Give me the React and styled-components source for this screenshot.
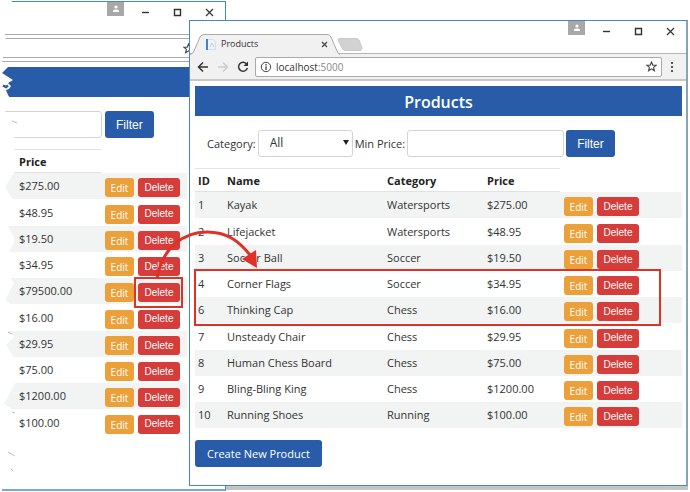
import React from "react";
import styled, { createGlobalStyle, css } from "styled-components";

const PRODUCTS = [
  [1, "Kayak", "Watersports", "$275.00"],
  [2, "Lifejacket", "Watersports", "$48.95"],
  [3, "Soccer Ball", "Soccer", "$19.50"],
  [4, "Corner Flags", "Soccer", "$34.95"],
  [6, "Thinking Cap", "Chess", "$16.00"],
  [7, "Unsteady Chair", "Chess", "$29.95"],
  [8, "Human Chess Board", "Chess", "$75.00"],
  [9, "Bling-Bling King", "Chess", "$1200.00"],
  [10, "Running Shoes", "Running", "$100.00"],
];

const OLD_PRICES = [
  "$275.00", "$48.95", "$19.50", "$34.95", "$79500.00",
  "$16.00", "$29.95", "$75.00", "$1200.00", "$100.00",
];

const BLUE = "#285ca8";
const RED = "#de3127";

const GlobalStyle = createGlobalStyle`
  *, *::before, *::after { box-sizing: border-box; }
  body {
    margin: 0;
    background: #fff;
    color: #333;
    font: 11px/18px "Open Sans", "Noto Sans", sans-serif;
  }
  button, input, select { font: inherit; color: inherit; margin: 0; }
`;

const Desktop = styled.main`
  position: relative;
  min-height: 100vh;
  overflow: hidden;
  padding: 20px 2px 6px 189px;
`;

const windowFrame = css`
  display: flex;
  flex-direction: column;
  background: #fff;
  border: 1px solid #4389c9;
`;

const BackWindow = styled.section`
  ${windowFrame}
  position: absolute;
  left: 0;
  top: 1px;
  bottom: 1px;
  width: 226px;
  border-left: 0;
  border-bottom: 2px solid #78a9d8;
`;

const FrontWindow = styled.section`
  ${windowFrame}
  position: relative;
  min-height: calc(100vh - 26px);
  border-right: 2px solid #86a5b5;

  &::after {
    content: "";
    position: absolute;
    left: 36px;
    right: -2px;
    top: calc(100% + 1px);
    height: 4px;
    background: #c4c4c4;
  }
`;

const TitleBar = styled.header`
  display: flex;
  align-items: flex-start;
  height: 32px;
`;

const WindowControls = styled.div`
  display: flex;
  margin-left: auto;
`;

const ControlButton = styled.button`
  display: grid;
  place-items: center;
  width: 32px;
  height: 20px;
  padding: 0;
  border: 0;
  background: none;
  color: #333;
`;

const UserButton = styled(ControlButton)`
  width: 17px;
  height: 14px;
  margin-right: 5px;
  background: #a8a8a8;
  color: #fff;
`;

const Tab = styled.div`
  position: relative;
  display: flex;
  align-items: center;
  gap: 5px;
  width: 150px;
  height: 20px;
  margin-top: 13px;
  padding: 0 12px 0 16px;
  color: #333;
  font-size: 9px;
`;

const TabShape = styled.svg`
  position: absolute;
  inset: 0;
  z-index: 0;
`;

const TabTitle = styled.span`
  position: relative;
  flex: 1;
`;

const TabIcon = styled.svg`
  position: relative;
`;

const TabClose = styled.button`
  position: relative;
  display: flex;
  padding: 0;
  border: 0;
  background: none;
`;

const NewTab = styled.button`
  display: flex;
  margin-top: 17px;
  margin-left: -3px;
  padding: 0;
  border: 0;
  background: none;
`;

const Toolbar = styled.nav`
  display: flex;
  align-items: center;
  height: 28px;
  padding: 0 4px 0 3px;
  background: #f1f1f1;
  border-top: 1px solid #b5b5b5;
  border-bottom: 2px solid #c9c7c3;
`;

const BackToolbar = styled.nav`
  display: flex;
  align-items: center;
  height: 28px;
  border-top: 1px solid #aaa;
  border-bottom: 1px solid #aaa;
`;

const ToolButton = styled.button`
  display: grid;
  place-items: center;
  width: 20px;
  height: 20px;
  padding: 0;
  border: 0;
  background: none;
  color: #444;
`;

const AddressBar = styled.div`
  display: flex;
  flex: 1;
  align-items: center;
  gap: 4px;
  height: 20px;
  margin-left: 2px;
  padding-left: 4px;
  background: #fff;
  border: 1px solid #aaa;
  border-radius: 2px;
`;

const BackAddressBar = styled(AddressBar)`
  margin: 0;
  padding-left: 178px;
  border-left: 0;
`;

const AddressText = styled.span`
  flex: 1;
  color: #333;
  font-size: 10px;
`;

const Port = styled.span`
  color: #888;
`;

const Page = styled.div`
  padding: 5px 4px 18px 5px;
`;

const BackPage = styled.div`
  padding-top: 5px;
`;

const Banner = styled.h1`
  height: 30px;
  margin: 0;
  background: ${BLUE};
  color: #fff;
  font-size: 16px;
  font-weight: 600;
  line-height: 32px;
  text-align: center;
`;

const FilterForm = styled.form`
  display: flex;
  align-items: center;
  gap: ${(p) => (p.$inset ? "2px" : "3px")};
  padding: 14px 0 11px ${(p) => (p.$inset ? "12px" : "0")};
`;

const fieldBox = css`
  height: 27px;
  background: #fff;
  border: 1px solid #d4d4d4;
  border-radius: 3px;
`;

const PriceInput = styled.input`
  ${fieldBox}
  width: ${(p) => (p.$narrow ? "102px" : "157px")};
`;

const SelectBox = styled.div`
  position: relative;
  display: flex;
`;

const CategorySelect = styled.select`
  ${fieldBox}
  appearance: none;
  width: 95px;
  padding: 0 12px 1px 11px;
  font-size: 12px;
`;

const SelectArrow = styled.svg`
  position: absolute;
  right: 4px;
  top: 10px;
  pointer-events: none;
`;

const FieldLabel = styled.label`
  white-space: nowrap;
`;

const PrimaryButton = styled.button`
  height: 27px;
  padding: 0 ${(p) => (p.$system ? "11px" : "12px")};
  border: 0;
  border-radius: 3px;
  background: ${BLUE};
  color: #fff;
  font-family: ${(p) => (p.$system ? '"Liberation Sans", Arial, sans-serif' : "inherit")};
  font-size: ${(p) => (p.$system ? "12px" : "11px")};
`;

const ProductTable = styled.table`
  width: ${(p) => (p.$narrow ? "187px" : "100%")};
  table-layout: fixed;
  border-collapse: separate;
  border-spacing: 0;
  line-height: 18px;
`;

const Column = styled.col`
  width: ${(p) => p.$width};
`;

const HeadCell = styled.th`
  height: 24px;
  padding: 1px 0 0 ${(p) => (p.$indent ? "19px" : "3px")};
  border-top: 1px solid #e2e2e2;
  border-bottom: 1px solid #e2e2e2;
  color: #222;
  font-weight: 700;
  text-align: left;
`;

const Row = styled.tr`
  height: 26px;
  &:nth-child(4n + 2) { height: 27px; }
  &:nth-child(odd) { background: #f1f4f2; }
`;

const Cell = styled.td`
  padding: 0 0 0 ${(p) => (p.$indent ? "19px" : "3px")};
  white-space: nowrap;
`;

const Actions = styled.div`
  display: flex;
  gap: 4px;
  padding-top: 3px;
  padding-left: 1px;
`;

const actionButton = css`
  height: 19px;
  border: 0;
  border-radius: 3px;
  color: #fff;
  font-size: 10px;
  line-height: 20px;
  text-align: center;
  text-decoration: none;
`;

const EditLink = styled.a`
  ${actionButton}
  width: 29px;
  background: #eca03a;
`;

const DeleteButton = styled.button`
  ${actionButton}
  width: 42px;
  padding: 0;
  background: #d53c3a;
  font-family: "Liberation Sans", Arial, sans-serif;
  line-height: 18px;
`;

const PageFooter = styled.footer`
  padding-top: 12px;
`;

const TornEdge = styled.svg`
  position: absolute;
  left: 0;
  top: -2px;
  pointer-events: none;
`;

const Annotation = styled.svg`
  position: absolute;
  left: 0;
  top: 0;
  pointer-events: none;
`;

function Controls() {
  return (
    <WindowControls>
      <UserButton aria-label="Profile">
        <svg width="8" height="8" viewBox="0 0 8 8" fill="currentColor">
          <circle cx="4" cy="2" r="1.6" />
          <path d="M1 7V5.8Q1 4.5 4 4.5T7 5.8V7Z" />
        </svg>
      </UserButton>
      <ControlButton aria-label="Minimize">
        <svg width="9" height="9" viewBox="0 0 9 9">
          <path d="M1 4.5H8" stroke="currentColor" strokeWidth="1.4" />
        </svg>
      </ControlButton>
      <ControlButton aria-label="Maximize">
        <svg width="9" height="9" viewBox="0 0 9 9">
          <path d="M1.5 1.5H7.5V7.5H1.5Z" fill="none" stroke="currentColor" strokeWidth="1.4" />
        </svg>
      </ControlButton>
      <ControlButton aria-label="Close">
        <svg width="9" height="9" viewBox="0 0 9 9">
          <path d="M1 1L8 8M8 1L1 8" stroke="currentColor" strokeWidth="1.2" />
        </svg>
      </ControlButton>
    </WindowControls>
  );
}

function Star() {
  return (
    <ToolButton aria-label="Bookmark">
      <svg width="11" height="11" viewBox="0 0 11 11" fill="none" stroke="currentColor" strokeWidth="1.1">
        <path d="M5.5 1L6.8 4.1L10.1 4.3L7.6 6.4L8.4 9.7L5.5 7.9L2.6 9.7L3.4 6.4L.9 4.3L4.2 4.1Z" />
      </svg>
    </ToolButton>
  );
}

function RowActions() {
  return (
    <Actions>
      <EditLink href="#edit">Edit</EditLink>
      <DeleteButton>Delete</DeleteButton>
    </Actions>
  );
}

function PreviousWindow() {
  return (
    <BackWindow aria-label="Products before deletion">
      <TitleBar><Controls /></TitleBar>
      <BackToolbar>
        <BackAddressBar><Star /></BackAddressBar>
      </BackToolbar>
      <BackPage>
        <Banner />
        <FilterForm onSubmit={(e) => e.preventDefault()}>
          <PriceInput $narrow aria-label="Min Price" />
          <PrimaryButton $system>Filter</PrimaryButton>
        </FilterForm>
        <ProductTable $narrow>
          <colgroup><Column $width="101px" /><Column /></colgroup>
          <thead><tr><HeadCell $indent>Price</HeadCell></tr></thead>
          <tbody>
            {OLD_PRICES.map((price) => (
              <Row key={price}>
                <Cell $indent>{price}</Cell>
                <Cell><RowActions /></Cell>
              </Row>
            ))}
          </tbody>
        </ProductTable>
      </BackPage>
      <TornEdge width="20" height="492" viewBox="0 0 20 492">
        <path
          fill="#fff"
          d="M0 0H12L5 34L6 40L3 57L2 62L8 67L2 73L13 80L8 83L11 86L9 89L6 90L8 95L10 98L5 111L15 124L14 150V173L5 187L13 200L8 226L15 240L9 252L10 277L14 283L5 300L12 305L8 331L14 337L6 345L14 357L15 383L4 404L14 410L2 480V492H0Z"
        />
        <path d="M3 85.500L6 87L8 85.500" fill="none" stroke={BLUE} strokeWidth="2.500" />
        <path d="M12 121L17 123M8 332L12 334M12 412L15 413M8 452L15 456M11 469L13 471" stroke="#bbb" />
      </TornEdge>
    </BackWindow>
  );
}

function CurrentWindow() {
  return (
    <FrontWindow aria-label="Products after deletion">
      <TitleBar>
        <Tab>
          <TabShape width="150" height="21" viewBox="0 0 150 21">
            <path d="M0 20.5Q3 20 4 17L10 3Q11 .5 14 .5H137Q140 .5 141 3L147 17Q148 20 150 20.5" fill="#f1f1f1" stroke="#aaa" />
          </TabShape>
          <TabIcon width="10" height="11" viewBox="0 0 10 11">
            <path d="M1 .5H7L9.500 3V10.500H1Z" fill="#edf3f8" stroke="#d4dde4" />
            <path d="M1 0V11" stroke="#4184c4" strokeWidth="2" />
            <path d="M4 8L6 4L8 8" fill="none" stroke="#bcd0de" />
          </TabIcon>
          <TabTitle>Products</TabTitle>
          <TabClose aria-label="Close tab">
            <svg width="7" height="7" viewBox="0 0 7 7"><path d="M1 1L6 6M6 1L1 6" stroke="#444" strokeWidth="1.2" /></svg>
          </TabClose>
        </Tab>
        <NewTab aria-label="New tab">
          <svg width="26" height="13" viewBox="0 0 26 13">
            <path d="M2 .5H19Q21 .5 22 2L25 10Q25 12.500 23 12.500H8Q6 12.500 5 10L1 2Q1 .5 2 .5Z" fill="#d2d2d2" stroke="#cacaca" />
          </svg>
        </NewTab>
        <Controls />
      </TitleBar>
      <Toolbar>
        <ToolButton aria-label="Back">
          <svg width="12" height="12" viewBox="0 0 12 12" fill="none" stroke="#333" strokeWidth="1.5"><path d="M11 6H2M6 1.500L1.500 6L6 10.500" /></svg>
        </ToolButton>
        <ToolButton aria-label="Forward">
          <svg width="12" height="12" viewBox="0 0 12 12" fill="none" stroke="#ccc" strokeWidth="1.5"><path d="M1 6H10M6 1.500L10.500 6L6 10.500" /></svg>
        </ToolButton>
        <ToolButton aria-label="Reload">
          <svg width="12" height="12" viewBox="0 0 12 12">
            <path d="M9.800 3.200A4.500 4.500 0 1 0 10.400 7" fill="none" stroke="#333" strokeWidth="1.5" />
            <path d="M11 .5V5H6.500Z" fill="#333" />
          </svg>
        </ToolButton>
        <AddressBar>
          <svg width="12" height="12" viewBox="0 0 12 12" stroke="#444" fill="none">
            <circle cx="6" cy="6" r="4.700" /><path d="M6 5.200V9M6 3V4.400" strokeWidth="1.3" />
          </svg>
          <AddressText>localhost<Port>:5000</Port></AddressText>
          <Star />
        </AddressBar>
        <ToolButton aria-label="Menu">
          <svg width="4" height="12" viewBox="0 0 4 12" fill="#333"><circle cx="2" cy="2" r="1.100" /><circle cx="2" cy="6" r="1.100" /><circle cx="2" cy="10" r="1.100" /></svg>
        </ToolButton>
      </Toolbar>
      <Page>
        <Banner>Products</Banner>
        <FilterForm $inset onSubmit={(e) => e.preventDefault()}>
          <FieldLabel htmlFor="category">Category:</FieldLabel>
          <SelectBox>
            <CategorySelect id="category" defaultValue="All">
              <option>All</option>
            </CategorySelect>
            <SelectArrow width="6" height="6" viewBox="0 0 6 6"><path d="M0 0H6L3 5Z" fill="#222" /></SelectArrow>
          </SelectBox>
          <FieldLabel htmlFor="price">Min Price:</FieldLabel>
          <PriceInput id="price" />
          <PrimaryButton $system>Filter</PrimaryButton>
        </FilterForm>
        <ProductTable>
          <colgroup>
            <Column $width="29px" />
            <Column $width="160px" />
            <Column $width="100px" />
            <Column $width="76px" />
            <Column />
          </colgroup>
          <thead>
            <tr>
              <HeadCell>ID</HeadCell><HeadCell>Name</HeadCell>
              <HeadCell>Category</HeadCell><HeadCell>Price</HeadCell>
            </tr>
          </thead>
          <tbody>
            {PRODUCTS.map(([id, name, category, price]) => (
              <Row key={id}>
                <Cell>{id}</Cell>
                <Cell>{name}</Cell>
                <Cell>{category}</Cell>
                <Cell>{price}</Cell>
                <Cell><RowActions /></Cell>
              </Row>
            ))}
          </tbody>
        </ProductTable>
        <PageFooter><PrimaryButton>Create New Product</PrimaryButton></PageFooter>
      </Page>
    </FrontWindow>
  );
}

export default function App() {
  return (
    <>
      <GlobalStyle />
      <Desktop>
        <PreviousWindow />
        <CurrentWindow />
        <Annotation width="690" height="492" viewBox="0 0 690 492" fill="none" stroke={RED} strokeWidth="2">
          <path d="M135 278H182V307H135Z" />
          <path d="M195 270H660V325H195Z" />
          <path d="M157 279C162 247 184 232 207 232C227 232 239 241 250 255" strokeWidth="3" />
          <path d="M257 268L242 259L256 250Z" fill={RED} stroke="none" />
        </Annotation>
      </Desktop>
    </>
  );
}
